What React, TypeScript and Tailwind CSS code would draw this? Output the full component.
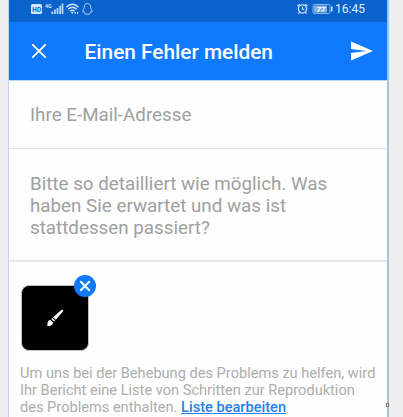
function StatusIcons() {
  return (
    <svg width="64" height="18" viewBox="0 0 64 18" className="block" fill="none">
      <rect x="0" y="4" width="11" height="10" rx="1.5" fill="#d5e5f8" />
      <text x="1.3" y="11.8" fontSize="7.5" fontWeight="700" fill="#0a62cc" fontFamily="Roboto, sans-serif" textLength="8.8" lengthAdjust="spacingAndGlyphs">HD</text>
      <text x="14" y="8" fontSize="6" fontWeight="700" fill="#d5e5f8" fontFamily="Roboto, sans-serif" textLength="6.5" lengthAdjust="spacingAndGlyphs">4G</text>
      <path d="M21.3 14v-2.5M23.9 14v-4.5M26.5 14V8M29.1 14V5.7M31.5 14V3.5" stroke="#c4daf5" strokeWidth="1.7" />
      <path d="M35.3 7.2c3.7-3.8 8.5-3.8 12.2 0M37.2 9.3c2.6-2.6 5.8-2.6 8.4 0M39.2 11.3c1.5-1.4 3-1.4 4.4 0" stroke="#d5e5f8" strokeWidth="1.5" />
      <path d="M39.8 12.3h3l-1.5 1.7zM43.7 12h1.2v1.7h-1.2zM46 12h1.2v1.7H46z" fill="#d5e5f8" />
      <path d="M56.4 3.5c-2.2 0-3.2 1.6-3.2 3.8-.1 1.7-1.5 2.9-1.5 4.7.2.4.8.1 1.2-.5.2 1 .9 1.5 1.2 1.8-.7.3-.5.8.3.8h4c.8 0 1-.5.3-.8.5-.4 1-1 1.2-1.8.4.6 1 .9 1.2.5 0-1.8-1.4-3-1.5-4.7 0-2.2-1-3.8-3.2-3.8z" stroke="#b4d1f3" strokeWidth="1" />
    </svg>
  );
}

function BatteryIcons() {
  return (
    <svg width="39" height="18" viewBox="0 0 39 18" className="block" fill="none">
      <circle cx="5.5" cy="9" r="4.1" stroke="#d5e5f8" strokeWidth="1.3" />
      <path d="M5.5 6.8V9l1.8 1M.5 6.2l2.2-2M10.5 6.2l-2.2-2M2.5 12l-1 1.6M8.5 12l1 1.6" stroke="#d5e5f8" strokeWidth="1.2" />
      <rect x="16" y="4.5" width="17" height="9" rx="1.3" stroke="#8eb7e9" />
      <rect x="17" y="5.5" width="13" height="7" fill="#82b0e7" />
      <path d="M34.8 6.5v5" stroke="#d5e5f8" strokeWidth="1.5" />
      <text x="19.5" y="12" fontSize="8" fontWeight="700" fontStyle="italic" fill="#fff" fontFamily="Roboto, sans-serif">77</text>
    </svg>
  );
}

export default function App() {
  return (
    <div className="h-[417px] w-[403px] overflow-hidden bg-[#efefef] pl-2 font-['Roboto',sans-serif]">
      <main className="relative flex h-full w-[381px] flex-col border-r-2 border-l border-r-[#afc0da] border-l-[#bfd5ef] bg-[#fefefe]">
        <div className="flex h-[22px] shrink-0 items-start bg-[#0a62cc] pl-[22px]">
          <StatusIcons />
          <div className="ml-[202px]"><BatteryIcons /></div>
          <span className="-ml-px text-[12px] leading-[18px] text-[#e2edfb]">16:45</span>
        </div>
        <header className="flex h-[58px] shrink-0 items-center bg-[#107aff] pl-[22px]">
          <svg width="16" height="16" viewBox="0 0 16 16" className="block"><path d="M1.3 1.3l13.4 13.4M14.7 1.3L1.3 14.7" stroke="#fff" strokeWidth="1.9" /></svg>
          <h1 className="ml-[37.5px] w-[266.5px] pt-px text-[20.8px] leading-6 font-medium whitespace-nowrap text-white">Einen Fehler melden</h1>
          <svg width="22" height="20" viewBox="0 0 22 20" className="block"><path d="M0 .5L22 10 0 19.5V12l15.5-2L0 8z" fill="#fff" /></svg>
        </header>
        <div className="flex h-[69px] shrink-0 items-center border-t border-b border-t-[#bad7fc] border-b-[#dedede] pl-[21px]">
          <span className="pt-px text-[18.8px] leading-[22px] text-[#a0a0a0]">Ihre E-Mail-Adresse</span>
        </div>
        <div className="h-[113px] shrink-0 border-b-2 border-[#e9e9e9] pt-[24px] pl-[21px] text-[18.8px] leading-[22px] whitespace-nowrap text-[#a0a0a0]">
          <p>Bitte so detailliert wie möglich. Was</p>
          <p>haben Sie erwartet und was ist</p>
          <p>stattdessen passiert?</p>
        </div>
        <section className="pt-[23px] pl-[11px]">
          <div className="relative ml-px flex h-[66px] w-[68px] items-center justify-center rounded-[8px] border border-[#c0c0c0] bg-black">
            <svg width="18" height="18" viewBox="0 0 18 18" className="block" fill="#fff"><path d="M16.8.8c.6.3.6 1-.1 1.9L9.8 10.8 7 8.3 14.8 1.5c.7-.6 1.4-1 2-.7zM6.3 9l2.8 2.5-1 1L5.3 10zM4.4 10.9l2.7 2.4c.1 3.1-3.2 4.5-6.6 3.3 1.2-.5.9-1.5 1.1-2.9.2-1.6 1.1-2.6 2.8-2.8z" /></svg>
            <svg width="22" height="22" viewBox="0 0 22 22" className="absolute -top-[11px] left-[52px]"><circle cx="11" cy="11" r="11" fill="#107aff" /><path d="M6.3 6.3l9.4 9.4M15.7 6.3l-9.4 9.4" stroke="#fff" strokeWidth="2" /></svg>
          </div>
          <div className="mt-[14px] text-[14.6px] leading-[17px] whitespace-nowrap text-[#adadad]">
            <p>Um uns bei der Behebung des Problems zu helfen, wird</p>
            <p>Ihr Bericht eine Liste von Schritten zur Reproduktion</p>
            <p>des Problems enthalten. <span className="font-medium text-[#2680ef] underline">Liste bearbeiten</span></p>
          </div>
        </section>
        <div className="absolute top-[403px] -right-[2px] h-[4px] w-[3px] border border-[#777] bg-white" />
      </main>
    </div>
  );
}
